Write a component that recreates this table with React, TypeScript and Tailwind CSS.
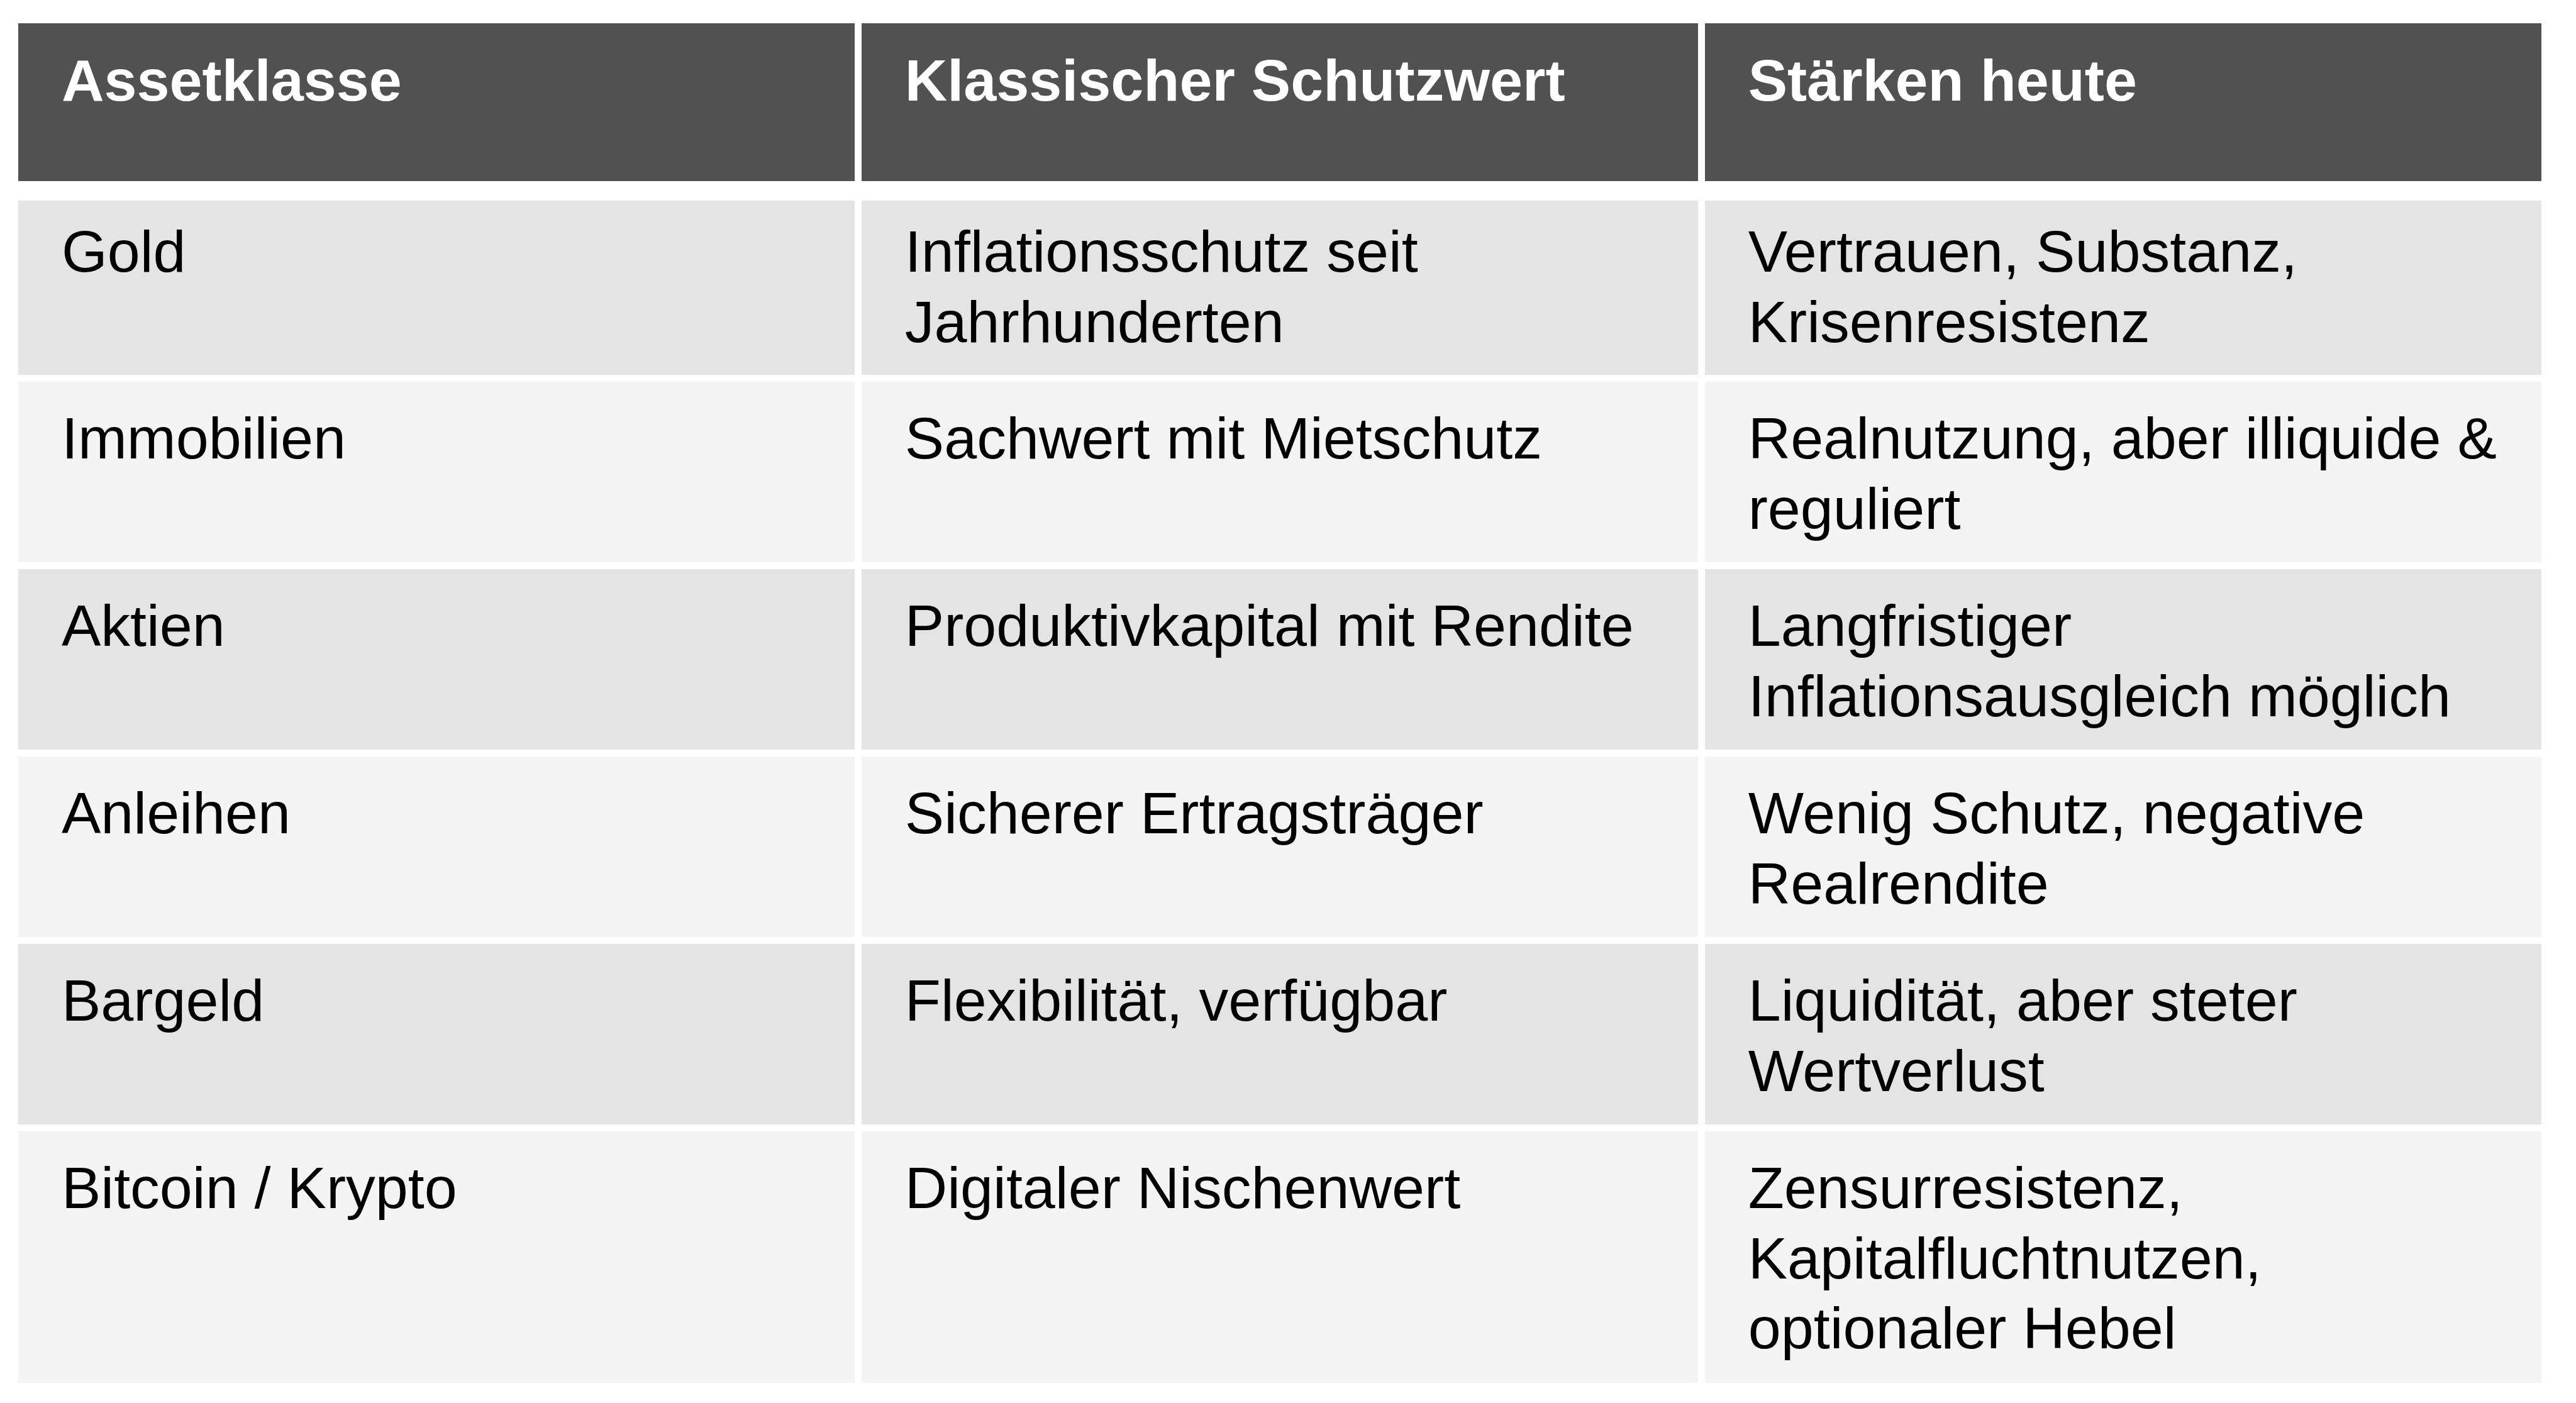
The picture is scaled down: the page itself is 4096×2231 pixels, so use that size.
import React from 'react';

type Row = {
  asset: string[];
  classic: string[];
  today: string[];
  height: string;
  pad: string;
  bg: string;
};

const headers = ['Assetklasse', 'Klassischer Schutzwert', 'Stärken heute'];

const rows: Row[] = [
  {
    asset: ['Gold'],
    classic: ['Inflationsschutz seit', 'Jahrhunderten'],
    today: ['Vertrauen, Substanz,', 'Krisenresistenz'],
    height: 'h-[277px]',
    pad: 'pt-[25px]',
    bg: 'bg-[#e4e4e4]',
  },
  {
    asset: ['Immobilien'],
    classic: ['Sachwert mit Mietschutz'],
    today: ['Realnutzung, aber illiquide &', 'reguliert'],
    height: 'h-[287.5px]',
    pad: 'pt-[34.5px]',
    bg: 'bg-[#f4f4f4]',
  },
  {
    asset: ['Aktien'],
    classic: ['Produktivkapital mit Rendite'],
    today: ['Langfristiger', 'Inflationsausgleich möglich'],
    height: 'h-[287.5px]',
    pad: 'pt-[34.5px]',
    bg: 'bg-[#e4e4e4]',
  },
  {
    asset: ['Anleihen'],
    classic: ['Sicherer Ertragsträger'],
    today: ['Wenig Schutz, negative', 'Realrendite'],
    height: 'h-[287.5px]',
    pad: 'pt-[34.5px]',
    bg: 'bg-[#f4f4f4]',
  },
  {
    asset: ['Bargeld'],
    classic: ['Flexibilität, verfügbar'],
    today: ['Liquidität, aber steter', 'Wertverlust'],
    height: 'h-[287.5px]',
    pad: 'pt-[34.5px]',
    bg: 'bg-[#e4e4e4]',
  },
  {
    asset: ['Bitcoin / Krypto'],
    classic: ['Digitaler Nischenwert'],
    today: ['Zensurresistenz,', 'Kapitalfluchtnutzen,', 'optionaler Hebel'],
    height: 'h-[400px]',
    pad: 'pt-[34.5px]',
    bg: 'bg-[#f4f4f4]',
  },
];

function Cell({ lines, pad, bg }: { lines: string[]; pad: string; bg: string }) {
  return (
    <div className={`${bg} ${pad} pl-[69px] pr-[20px] text-black`}>
      {lines.map((line, i) => (
        <div key={i} className="whitespace-nowrap">
          {line}
        </div>
      ))}
    </div>
  );
}

export default function App() {
  return (
    <div
      className="w-[4096px] h-[2231px] bg-white pl-[29px] pt-[37px] overflow-hidden text-[93.5px] leading-[111.5px]"
      style={{ fontFamily: '"Liberation Sans", Arial, sans-serif' }}
    >
      <div className="w-[4012px] flex flex-col">
        {/* Header */}
        <div className="grid grid-cols-3 gap-x-[10.5px] h-[251px]">
          {headers.map((h) => (
            <div key={h} className="bg-[#515151] text-white font-bold pl-[69px] pt-[35px] whitespace-nowrap">
              {h}
            </div>
          ))}
        </div>

        {/* Body */}
        <div className="mt-[31px] flex flex-col gap-y-[10.5px]">
          {rows.map((row) => (
            <div key={row.asset[0]} className={`grid grid-cols-3 gap-x-[10.5px] ${row.height}`}>
              <Cell lines={row.asset} pad={row.pad} bg={row.bg} />
              <Cell lines={row.classic} pad={row.pad} bg={row.bg} />
              <Cell lines={row.today} pad={row.pad} bg={row.bg} />
            </div>
          ))}
        </div>
      </div>
    </div>
  );
}
